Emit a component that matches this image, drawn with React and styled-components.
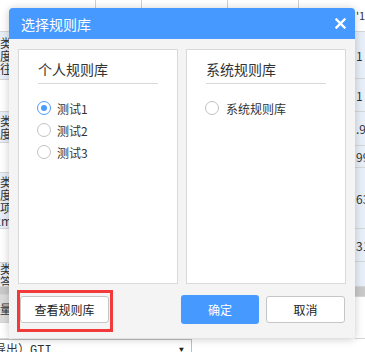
import styled, { createGlobalStyle } from "styled-components";

const GlobalStyle = createGlobalStyle`
  html, body {
    margin: 0;
    padding: 0;
    background: #ffffff;
  }
  body {
    font-family: "Noto Sans CJK SC", "Noto Sans", sans-serif;
    color: #333333;
  }
`;

const Page = styled.div`
  position: relative;
  width: 365px;
  height: 352px;
  overflow: hidden;
  background: #ffffff;
`;

/* spreadsheet behind the dialog */

const TopRow = styled.div`
  display: flex;
  height: 32px;
  box-sizing: border-box;
  border-bottom: 1px solid #d6d6d6;
`;

const TopCell = styled.div`
  width: ${({ $w }) => $w}px;
  flex: ${({ $w }) => ($w ? "none" : "1")};
  box-sizing: border-box;
  border-right: ${({ $w }) => ($w ? "1px solid #cfcfcf" : "none")};
  padding-left: ${({ $pad }) => $pad || 0}px;
  font-size: 11px;
  line-height: 30px;
  color: #333;
  white-space: nowrap;
  overflow: hidden;
`;

const Middle = styled.div`
  display: flex;
  height: 307px;
`;

const Strip = styled.div`
  display: flex;
  flex-direction: column;
  width: ${({ $w }) => $w}px;
  flex: none;
  overflow: hidden;
`;

const Spacer = styled.div`
  flex: 1;
`;

const StripCell = styled.div`
  height: ${({ $h }) => $h}px;
  flex: none;
  box-sizing: border-box;
  border-bottom: 1px solid #d6d6d6;
  background: ${({ $tone }) =>
    $tone === "blue" ? "#e9eff9" : $tone === "gray" ? "#c9c9c9" : $tone === "mid" ? "#dcdcdc" : "#ffffff"};
  display: flex;
  flex-direction: column;
  justify-content: center;
  align-items: ${({ $side }) => ($side === "right" ? "flex-start" : "flex-end")};
  padding-left: ${({ $side }) => ($side === "right" ? 1 : 0)}px;
  font-size: 12px;
  line-height: 13px;
  color: #333;
  white-space: nowrap;
  overflow: hidden;
`;

const VChar = styled.div`
  margin-right: -3px;
  font-size: 12px;
  line-height: 13px;
  text-align: right;
`;

const BottomRow = styled.div`
  display: flex;
  height: 13px;
`;

const SelectBox = styled.div`
  width: 192px;
  box-sizing: border-box;
  border-top: 1px solid #bfbfbf;
  border-right: 1px solid #bfbfbf;
  display: flex;
  justify-content: space-between;
  padding-right: 6px;
  font-family: "Liberation Mono", "Noto Sans CJK SC", monospace;
  font-size: 12px;
  line-height: 22px;
  overflow: hidden;
  white-space: nowrap;
  text-indent: -6px;
`;

const Caret = styled.span`
  font-size: 8px;
  line-height: 20px;
  color: #222;
`;

/* dialog */

const Dialog = styled.div`
  position: absolute;
  left: 9px;
  top: 8px;
  width: 346px;
  height: 330px;
  display: flex;
  flex-direction: column;
  background: #f4f4f4;
  border-radius: 4px;
  overflow: hidden;
  box-shadow: 0 1px 8px rgba(0, 0, 0, 0.22);
`;

const Header = styled.div`
  height: 31px;
  flex: none;
  background: #4599ff;
  display: flex;
  align-items: center;
  justify-content: space-between;
  padding: 0 9px 0 12px;
`;

const Title = styled.span`
  color: #ffffff;
  font-size: 14px;
  line-height: 20px;
`;

const CloseButton = styled.button`
  border: none;
  background: none;
  padding: 0;
  width: 11px;
  height: 11px;
  display: flex;
  cursor: pointer;
`;

const Body = styled.div`
  display: grid;
  grid-template-columns: 160px 160px;
  gap: 8px;
  padding: 10px 9px 0;
`;

const Panel = styled.div`
  height: 235px;
  box-sizing: border-box;
  background: #ffffff;
  border: 1px solid #d9d9d9;
  padding: 9px 18px 0;
`;

const PanelTitle = styled.div`
  width: 120px;
  margin-left: 1px;
  padding-bottom: 4px;
  border-bottom: 1px solid #d9d9d9;
  font-size: 14px;
  line-height: 20px;
  color: #333;
`;

const RadioList = styled.div`
  margin-top: 13px;
  display: flex;
  flex-direction: column;
`;

const RadioRow = styled.label`
  height: 22px;
  display: flex;
  align-items: center;
  font-size: 12px;
  color: #333;
  cursor: pointer;
`;

const RadioDot = styled.span`
  width: 14px;
  height: 14px;
  box-sizing: border-box;
  border-radius: 50%;
  border: 1px solid ${({ $checked }) => ($checked ? "#4a9cff" : "#c2c2c2")};
  background: #ffffff;
  display: flex;
  align-items: center;
  justify-content: center;
  margin-right: ${({ $gap }) => $gap || 6}px;

  &::after {
    content: "";
    width: 6px;
    height: 6px;
    border-radius: 50%;
    background: ${({ $checked }) => ($checked ? "#4a9cff" : "transparent")};
  }
`;

const Footer = styled.div`
  margin-top: 6px;
  height: 42px;
  display: flex;
  justify-content: space-between;
  align-items: flex-start;
  padding: 0 10px 0 8px;
`;

const Highlight = styled.div`
  width: 96px;
  height: 42px;
  box-sizing: border-box;
  border: 3px solid #f23a3a;
  padding-top: 3px;
`;

const Button = styled.button`
  width: ${({ $w }) => $w}px;
  height: ${({ $primary }) => ($primary ? 29 : 27)}px;
  box-sizing: border-box;
  border-radius: 3px;
  border: ${({ $primary }) => ($primary ? "none" : "1px solid #c6c6c6")};
  background: ${({ $primary }) => ($primary ? "#4599ff" : "#ffffff")};
  color: ${({ $primary }) => ($primary ? "#ffffff" : "#222222")};
  font-family: "Noto Sans CJK SC", sans-serif;
  font-size: 12px;
  padding: 0;
  cursor: pointer;
`;

const Actions = styled.div`
  padding-top: 5px;
  display: flex;
  align-items: center;
  gap: 7px;
`;

const leftCells = [
  { h: 48, tone: "blue", lines: ["类", "度", "往"] },
  { h: 32 },
  { h: 31, tone: "blue", lines: ["类", "度"] },
  { h: 30 },
  { h: 56, tone: "blue", lines: ["类", "度", "项", "2m"] },
  { h: 34 },
  { h: 24, tone: "blue", lines: ["类", "答"] },
  { h: 8, tone: "gray" },
  { h: 28, tone: "mid", lines: ["量"] },
  { h: 16 },
];

const rightCells = [
  { h: 47, tone: "blue", text: "1" },
  { h: 33, tone: "blue", text: "1" },
  { h: 34, tone: "blue", text: ".9" },
  { h: 22, tone: "blue", text: "990" },
  { h: 61, tone: "blue", text: "63" },
  { h: 33, tone: "blue", text: "310" },
  { h: 25, tone: "blue" },
  { h: 10, tone: "gray" },
  { h: 42 },
];

function Radio({ label, checked, gap }) {
  return (
    <RadioRow>
      <RadioDot $checked={checked} $gap={gap} />
      {label}
    </RadioRow>
  );
}

export default function App() {
  return (
    <Page>
      <GlobalStyle />
      <TopRow>
        <TopCell $w={96} />
        <TopCell $w={46} />
        <TopCell $w={86} />
        <TopCell $w={71} />
        <TopCell $pad={57}>'1:</TopCell>
      </TopRow>
      <Middle>
        <Strip $w={9}>
          {leftCells.map((c, i) => (
            <StripCell key={i} $h={c.h} $tone={c.tone} $side="left">
              {c.lines && c.lines.map((l, j) => <VChar key={j}>{l}</VChar>)}
            </StripCell>
          ))}
        </Strip>
        <Spacer />
        <Strip $w={10}>
          {rightCells.map((c, i) => (
            <StripCell key={i} $h={c.h} $tone={c.tone} $side="right">
              {c.text}
            </StripCell>
          ))}
        </Strip>
      </Middle>
      <BottomRow>
        <SelectBox>
          <span>导出）GTI</span>
          <Caret>▼</Caret>
        </SelectBox>
      </BottomRow>

      <Dialog>
        <Header>
          <Title>选择规则库</Title>
          <CloseButton aria-label="关闭">
            <svg width="11" height="11" viewBox="0 0 11 11">
              <path d="M1.5 1.5 L9.5 9.5 M9.5 1.5 L1.5 9.5" stroke="#ffffff" strokeWidth="2.4" strokeLinecap="square" />
            </svg>
          </CloseButton>
        </Header>
        <Body>
          <Panel>
            <PanelTitle>个人规则库</PanelTitle>
            <RadioList>
              <Radio label="测试1" checked />
              <Radio label="测试2" />
              <Radio label="测试3" />
            </RadioList>
          </Panel>
          <Panel>
            <PanelTitle>系统规则库</PanelTitle>
            <RadioList>
              <Radio label="系统规则库" gap={7} />
            </RadioList>
          </Panel>
        </Body>
        <Footer>
          <Highlight>
            <Button $w={89}>查看规则库</Button>
          </Highlight>
          <Actions>
            <Button $w={78} $primary>
              确定
            </Button>
            <Button $w={79}>取消</Button>
          </Actions>
        </Footer>
      </Dialog>
    </Page>
  );
}
